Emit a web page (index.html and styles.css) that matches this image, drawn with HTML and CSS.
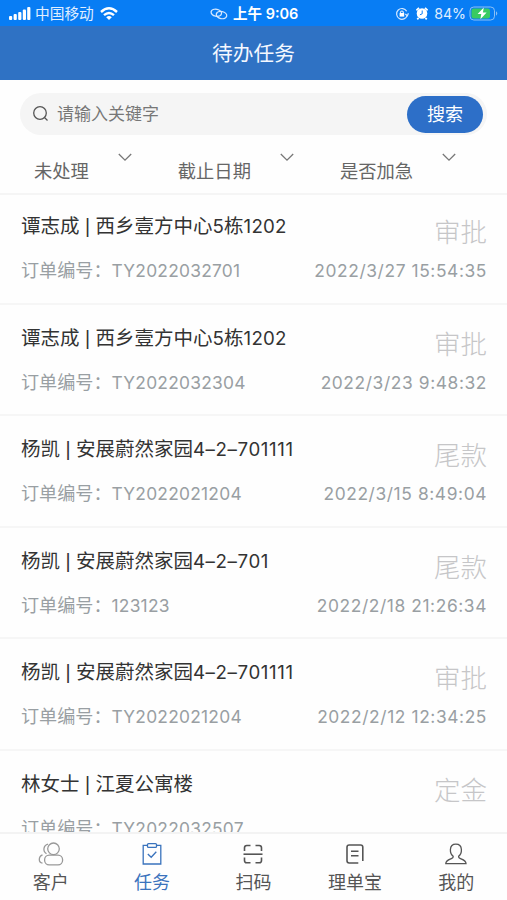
FILE: index.html
```html
<!DOCTYPE html>
<html lang="zh-CN">
<head>
    <meta charset="UTF-8">
    <meta name="viewport" content="width=device-width, initial-scale=1.0">
    <title>待办任务</title>
    <link rel="stylesheet" href="styles.css">
</head>
<body>
    <div class="status-bar">
        <div class="status-left">
            <svg width="22" height="14" viewBox="0 0 22 14" fill="#fff">
                <rect x="0" y="9" width="3.2" height="4" rx="1"/>
                <rect x="4.6" y="7" width="3.2" height="6" rx="1"/>
                <rect x="9.2" y="5" width="3.2" height="8" rx="1"/>
                <rect x="13.8" y="2.5" width="3.2" height="10.5" rx="1"/>
                <rect x="18.2" y="0" width="3.2" height="13" rx="1"/>
            </svg>
            <span class="carrier">中国移动</span>
            <svg width="18" height="14" viewBox="0 0 18 14" fill="none" stroke="#fff" stroke-width="2.4">
                <path d="M1 5 Q9 -2.4 17 5"/>
                <path d="M4 8.2 Q9 3.8 14 8.2"/>
                <path d="M9 13 L6.2 10.2 Q9 8 11.8 10.2 Z" fill="#fff" stroke="none"/>
            </svg>
        </div>
        <div class="status-center">
            <svg width="18" height="12" viewBox="0 0 18 12" fill="none" stroke="#d5e8ff" stroke-width="1.3">
                <ellipse cx="6.3" cy="4.8" rx="5.3" ry="3.5" transform="rotate(12 6.3 4.8)"/>
                <ellipse cx="11.5" cy="7.1" rx="5.3" ry="3.5" transform="rotate(12 11.5 7.1)"/>
            </svg>
            <span class="clock">上午 9:06</span>
        </div>
        <div class="status-right">
            <svg class="lock" width="14" height="14" viewBox="0 0 14 14" fill="none" stroke="#d5e8ff" stroke-width="1.2">
                <path d="M11.7 4.2 A5.4 5.4 0 1 0 12.2 8.4"/>
                <path d="M10.3 7 L12.4 8.8 L13.4 6.2"/>
                <rect x="4.6" y="6" width="4.6" height="3.6" fill="#fff" stroke="none"/>
                <path d="M5.5 6 V5 Q6.9 3 8.3 5 V6"/>
            </svg>
            <svg class="alarm" width="12" height="13" viewBox="0 0 12 13">
                <circle cx="6" cy="6.5" r="5.3" fill="#fff"/>
                <path d="M0.4 3.3 L3 0.8 M11.6 3.3 L9 0.8 M2.5 11 L1.3 12.4 M9.5 11 L10.7 12.4" stroke="#fff" stroke-width="1.8"/>
                <path d="M6.2 3.5 V6.8 L3.9 7.8" fill="none" stroke="#0d7ef5"/>
            </svg>
            <span class="percent">84%</span>
            <svg width="30" height="15" viewBox="0 0 30 15">
                <rect x="1" y="1" width="24.5" height="13" rx="3.8" fill="none" stroke="#8cc0f5"/>
                <rect x="2.5" y="2.5" width="18.5" height="10" rx="2.2" fill="#39cb62"/>
                <path d="M27 5.3 Q29.6 7.5 27 9.7 Z" fill="#8cc0f5"/>
                <path d="M14.8 1.5 L8.6 8.1 H12.3 L11.4 13.3 L17.6 6.6 H13.9 Z" fill="#fff"/>
            </svg>
        </div>
    </div>

    <h1 class="page-title">待办任务</h1>

    <div class="search">
        <svg width="18" height="18" viewBox="0 0 18 18" fill="none" stroke="#555" stroke-width="1.3">
            <circle cx="8" cy="8" r="6.3"/>
            <path d="M12.5 12.5 L15.5 15.5"/>
        </svg>
        <span class="search-text">请输入关键字</span>
        <button type="button" class="search-btn">搜索</button>
    </div>

    <div class="filters">
        <div class="filter">
            <span>未处理</span>
            <svg width="14" height="9" viewBox="0 0 14 9"><path d="M0.8 1 L7 7.2 L13.2 1"/></svg>
        </div>
        <div class="filter">
            <span>截止日期</span>
            <svg width="14" height="9" viewBox="0 0 14 9"><path d="M0.8 1 L7 7.2 L13.2 1"/></svg>
        </div>
        <div class="filter">
            <span>是否加急</span>
            <svg width="14" height="9" viewBox="0 0 14 9"><path d="M0.8 1 L7 7.2 L13.2 1"/></svg>
        </div>
    </div>

    <div class="list">
        <div class="item">
            <div class="item-top"><span class="name">谭志成 | 西乡壹方中心<span class="num">5</span>栋<span class="num">1202</span></span><span class="state">审批</span></div>
            <div class="item-bottom"><span>订单编号：<span class="num">TY2022032701</span></span><span class="num date">2022/3/27 15:54:35</span></div>
        </div>
        <div class="item">
            <div class="item-top"><span class="name">谭志成 | 西乡壹方中心<span class="num">5</span>栋<span class="num">1202</span></span><span class="state">审批</span></div>
            <div class="item-bottom"><span>订单编号：<span class="num">TY2022032304</span></span><span class="num date">2022/3/23 9:48:32</span></div>
        </div>
        <div class="item">
            <div class="item-top"><span class="name">杨凯 | 安展蔚然家园<span class="num unit">4–2–701111</span></span><span class="state">尾款</span></div>
            <div class="item-bottom"><span>订单编号：<span class="num">TY2022021204</span></span><span class="num date">2022/3/15 8:49:04</span></div>
        </div>
        <div class="item">
            <div class="item-top"><span class="name">杨凯 | 安展蔚然家园<span class="num unit">4–2–701</span></span><span class="state">尾款</span></div>
            <div class="item-bottom"><span>订单编号：<span class="num">123123</span></span><span class="num date">2022/2/18 21:26:34</span></div>
        </div>
        <div class="item">
            <div class="item-top"><span class="name">杨凯 | 安展蔚然家园<span class="num unit">4–2–701111</span></span><span class="state">审批</span></div>
            <div class="item-bottom"><span>订单编号：<span class="num">TY2022021204</span></span><span class="num date">2022/2/12 12:34:25</span></div>
        </div>
        <div class="item">
            <div class="item-top"><span class="name">林女士 | 江夏公寓楼</span><span class="state">定金</span></div>
            <div class="item-bottom"><span>订单编号：<span class="num">TY2022032507</span></span></div>
        </div>
    </div>

    <div class="tab-bar">
        <div class="tab">
            <svg class="light" width="26" height="24" viewBox="0 0 26 24">
                <circle cx="15.5" cy="6.8" r="5.8"/>
                <path d="M10 2.1 A5.3 5.3 0 0 0 8.5 11.8"/>
                <rect x="6.6" y="13.2" width="18" height="9.6" rx="4.6"/>
                <path d="M4.5 12.8 Q1.3 14 1.3 17.5 Q1.3 20.7 4.5 21.2"/>
            </svg>
            <span>客户</span>
        </div>
        <div class="tab active">
            <svg width="26" height="24" viewBox="0 0 26 24">
                <path d="M8.5 3.4 H4.2 V22 H21.8 V3.4 H17.5"/>
                <rect x="8.5" y="1.6" width="9" height="3.8" rx="1"/>
                <path d="M8.8 12 L12.2 15.3 L17.3 9.7"/>
            </svg>
            <span>任务</span>
        </div>
        <div class="tab">
            <svg class="bold" width="26" height="24" viewBox="0 0 26 24">
                <path d="M10.5 3.5 H6.8 Q4.5 3.5 4.5 5.8 V9 M15.5 3.5 H19.2 Q21.5 3.5 21.5 5.8 V9"/>
                <path d="M4.5 15.5 V18.4 Q4.5 20.7 6.8 20.7 H10.5 M15.5 20.7 H19.2 Q21.5 20.7 21.5 18.4 V15.5"/>
                <path d="M3.5 12.2 H22.5"/>
            </svg>
            <span>扫码</span>
        </div>
        <div class="tab">
            <svg class="bold" width="26" height="24" viewBox="0 0 26 24">
                <path d="M16.3 21 H7.2 Q5 21 5 18.8 V5.2 Q5 3 7.2 3 H18.6 Q20.8 3 20.8 5.2 V19"/>
                <path d="M9 9.3 H16.5 M9 13.8 H16.5"/>
            </svg>
            <span>理单宝</span>
        </div>
        <div class="tab">
            <svg width="26" height="24" viewBox="0 0 26 24">
                <path d="M10.2 14.3 C7.8 12.5 7.3 9.6 7.4 7.5 Q7.7 2.2 12.9 2.2 Q18.1 2.2 18.4 7.5 C18.5 9.6 18 12.5 15.6 14.3 Q15.5 15.8 17 16.4 C20.3 17.7 23 18.3 23 21.6 H2.8 C2.8 18.3 5.5 17.7 8.8 16.4 Q10.3 15.8 10.2 14.3 Z"/>
            </svg>
            <span>我的</span>
        </div>
    </div>
</body>
</html>
```

FILE: styles.css
```css
* {
    box-sizing: border-box;
}

body {
    font-family: "Liberation Sans", "Noto Sans CJK SC", sans-serif;
    margin: 0;
    height: 900px;
    background-color: #fefefe;
    display: flex;
    flex-direction: column;
    overflow: hidden;
    white-space: nowrap;
}

svg {
    display: block;
    flex-shrink: 0;
}

.status-bar {
    height: 26px;
    padding: 1px 8px 0 9px;
    background-color: #087df4;
    color: #fff;
    display: grid;
    grid-template-columns: 201px 1fr auto;
    align-items: center;
    font-size: 15px;
    line-height: 24px;
}

.status-left,
.status-center,
.status-right {
    display: flex;
    align-items: center;
}

.carrier {
    margin: 0 6px 0 4px;
    color: #e0eeff;
    font-size: 14.7px;
}

.clock {
    margin-left: 5px;
    font-family: "Inter", "Noto Sans CJK SC", sans-serif;
    font-size: 14.5px;
    font-weight: 600;
}

.alarm {
    margin: 0 6px 0 7px;
}

.percent {
    margin-right: 3px;
    font-family: "Inter", sans-serif;
    font-size: 14.2px;
    color: #e0eeff;
}

.page-title {
    height: 54px;
    margin: 0;
    background-color: #2f72c4;
    color: #f4f8ff;
    font-size: 20.7px;
    font-weight: 400;
    line-height: 56px;
    text-align: center;
}

.search {
    height: 42px;
    margin: 13px 20px 0;
    padding: 0 4px 0 12px;
    border-radius: 21px;
    background-color: #f5f5f5;
    display: flex;
    align-items: center;
}

.search-text {
    flex: 1;
    margin: -3px 0 0 7px;
    color: #777;
    font-size: 17px;
}

.search-btn {
    width: 76px;
    height: 37px;
    padding: 0 0 3px;
    border: none;
    border-radius: 19px;
    background-color: #2d6fc8;
    color: #fff;
    font-family: inherit;
    font-size: 18px;
}

.filters {
    height: 60px;
    padding: 0 51px 0 34px;
    border-bottom: 2px solid #f5f5f5;
    display: flex;
    justify-content: space-between;
}

.filter {
    display: flex;
    gap: 29px;
    color: #666;
    font-size: 18.3px;
    line-height: 26px;
    padding-top: 24px;
}

.filter svg {
    margin-top: -6px;
    fill: none;
    stroke: #777;
    stroke-width: 1.3;
}

.list {
    flex: 1;
    min-height: 0;
    overflow: hidden;
}

.item {
    height: 111.6px;
    padding: 20px 20px 0 21px;
    border-bottom: 2px solid #f6f6f6;
}

.item:first-child {
    height: 109.6px;
    padding-top: 18px;
}

.item-top,
.item-bottom {
    display: flex;
    justify-content: space-between;
}

.item-top {
    height: 44px;
}

.name {
    margin-top: -1px;
    color: #333;
    font-size: 19.5px;
    line-height: 28px;
}

.num {
    font-family: "Inter", sans-serif;
    font-size: 0.96em;
    letter-spacing: 0.25px;
}

.unit {
    letter-spacing: 0.6px;
}

.date {
    letter-spacing: 0.6px;
}

.state {
    padding-top: 2px;
    color: #c6c6c8;
    font-size: 26.5px;
    font-weight: 300;
    line-height: 36px;
}

.item-bottom {
    color: #999fa3;
    font-size: 18.1px;
    line-height: 28px;
}

.tab-bar {
    height: 68px;
    border-top: 2px solid #f3f3f3;
    background-color: #fefefe;
    display: grid;
    grid-template-columns: repeat(5, 1fr);
}

.tab {
    padding-top: 8px;
    display: flex;
    flex-direction: column;
    align-items: center;
    color: #555;
    font-size: 18px;
    line-height: 28px;
}

.tab svg {
    margin-bottom: 3px;
    fill: none;
    stroke: currentColor;
    stroke-width: 1.3;
}

.tab .light {
    stroke: #999;
}

.tab .bold {
    stroke-width: 1.6;
}

.active {
    color: #3a73bd;
}
```
